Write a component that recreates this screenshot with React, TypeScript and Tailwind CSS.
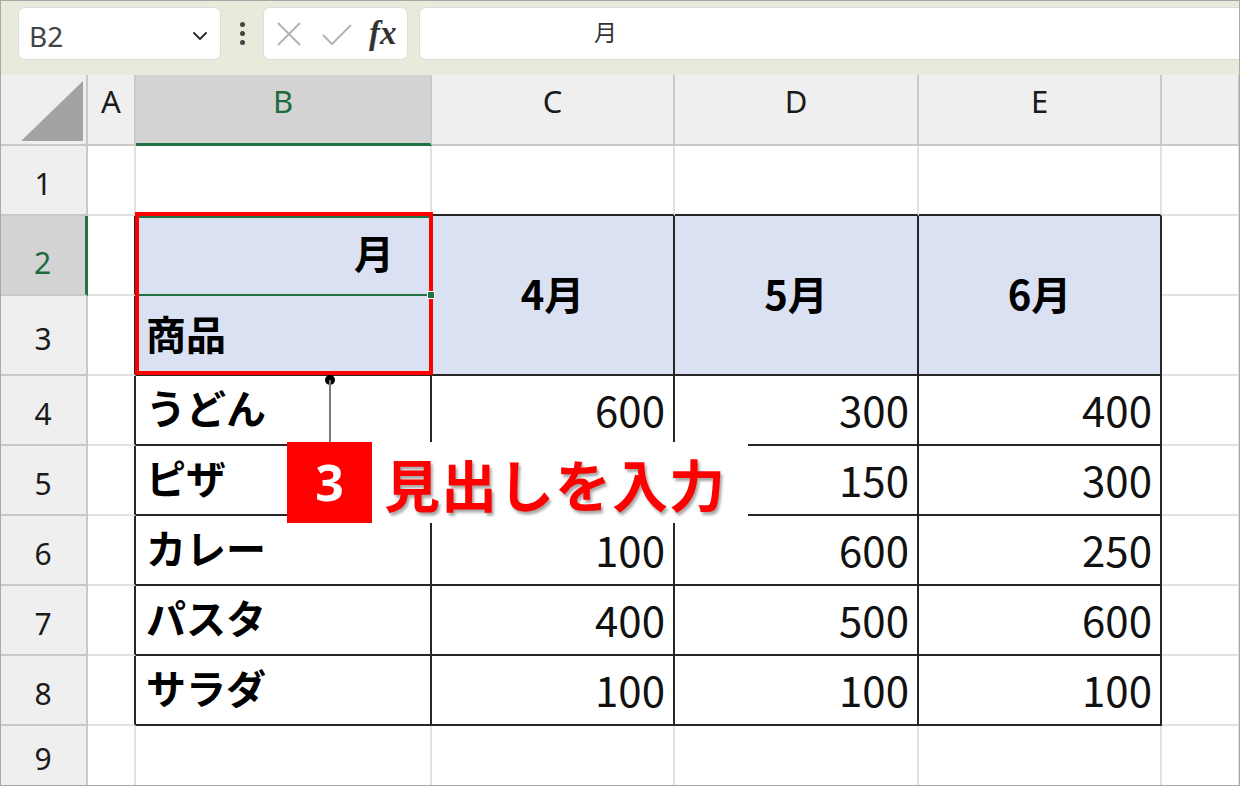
import { ChevronDown } from "lucide-react";

const COLS = ["A", "B", "C", "D", "E", ""];
const JP = '"Noto Sans CJK JP", "Noto Sans", sans-serif';

type Row = { name: string; values: string[] };

const rows: Row[] = [
  { name: "うどん", values: ["600", "300", "400"] },
  { name: "ピザ", values: ["", "150", "300"] },
  { name: "カレー", values: ["100", "600", "250"] },
  { name: "パスタ", values: ["400", "500", "600"] },
  { name: "サラダ", values: ["100", "100", "100"] },
];

const grid = "border-r-2 border-b-2 border-[#e2e2e2]";
const head = "border-r-2 border-b-2 border-[#c9c9c9] bg-[#efefef]";
const black = "border-r-2 border-b-2 border-[#262626]";

function FormulaBar() {
  return (
    <div className="flex h-[75px] items-start bg-[#e8ebdc] pt-[7px] pl-[18px]">
      <div className="flex h-[53px] w-[203px] items-center justify-between rounded-[7px] border border-[#dcdcdc] bg-white pt-[5px] pr-[8px] pl-[10px]">
        <span className="text-[28px] text-[#444]" style={{ fontFamily: '"Noto Sans", sans-serif' }}>
          B2
        </span>
        <ChevronDown size={24} strokeWidth={2} className="text-[#333]" />
      </div>
      <div className="flex h-[53px] w-[42px] flex-col items-center justify-center gap-[4px]">
        <span className="h-[5px] w-[5px] rounded-full bg-[#444]" />
        <span className="h-[5px] w-[5px] rounded-full bg-[#444]" />
        <span className="h-[5px] w-[5px] rounded-full bg-[#444]" />
      </div>
      <div className="flex h-[53px] w-[145px] items-center rounded-[7px] border border-[#dcdcdc] bg-white pl-[11px]">
        <svg width="28" height="28" viewBox="0 0 28 28" className="mr-[18px]">
          <path d="M3 3 L25 25 M25 3 L3 25" stroke="#b4b4b4" strokeWidth="2" fill="none" />
        </svg>
        <svg width="32" height="26" viewBox="0 0 32 26" className="mr-[16px]">
          <path d="M2 14 L11 23 L30 4" stroke="#b4b4b4" strokeWidth="2" fill="none" />
        </svg>
        <span
          className="text-[33px] font-bold text-[#333] italic leading-none"
          style={{ fontFamily: '"Liberation Serif", serif' }}
        >
          fx
        </span>
      </div>
      <div className="ml-[11px] flex h-[53px] flex-1 items-center rounded-l-[7px] border border-[#dcdcdc] bg-white pb-[4px] pl-[174px]">
        <span className="text-[23px] text-[#333]" style={{ fontFamily: JP }}>
          月
        </span>
      </div>
    </div>
  );
}

function Sheet() {
  return (
    <div
      className="grid grid-cols-[88px_48px_296px_243px_244px_243px_1fr] grid-rows-[71px_70px_80px_80px_70px_70px_70px_70px_70px_61px]"
      style={{ fontFamily: JP }}
    >
      {/* corner */}
      <div className={`${head} flex items-end justify-end pr-[3px] pb-[3px]`}>
        <svg width="62" height="60" viewBox="0 0 62 60">
          <polygon points="0,60 62,0 62,60" fill="#a3a3a3" />
        </svg>
      </div>
      {COLS.map((c) => (
        <div
          key={c || "F"}
          className={
            c === "B"
              ? "flex items-center justify-center border-r-2 border-b-[3px] border-r-[#c9c9c9] border-b-[#217346] bg-[#d3d3d3] pb-[16px] text-[31px] text-[#1d6b3d]"
              : `${head} flex items-center justify-center pb-[16px] text-[31px] text-[#1a1a1a]`
          }
          style={{ fontFamily: '"Noto Sans", sans-serif' }}
        >
          {c}
        </div>
      ))}

      {/* row 1 */}
      <RowHead n={1} />
      <div className={grid} />
      <div className="border-r-2 border-b-2 border-r-[#e2e2e2] border-b-[#262626]" />
      <div className="border-r-2 border-b-2 border-r-[#e2e2e2] border-b-[#262626]" />
      <div className="border-r-2 border-b-2 border-r-[#e2e2e2] border-b-[#262626]" />
      <div className="border-r-2 border-b-2 border-r-[#e2e2e2] border-b-[#262626]" />
      <div className={grid} />

      {/* rows 2 and 3: header block */}
      <div
        className="col-start-1 row-start-3 flex items-center justify-center border-r-[3px] border-b-2 border-r-[#217346] border-b-[#c9c9c9] bg-[#d3d3d3] pt-[14px] text-[30px] text-[#1d6b3d]"
        style={{ fontFamily: '"Noto Sans", sans-serif' }}
      >
        2
      </div>
      <div className="col-start-2 row-start-3 border-r-2 border-b-2 border-r-[#262626] border-b-[#e2e2e2]" />
      <div className="col-start-3 row-start-3 flex items-center justify-end border-r-2 border-[#262626] bg-[#dae1f2] pr-[36px] pb-[8px] text-[40px] font-bold text-black">
        月
      </div>
      {["4月", "5月", "6月"].map((m, i) => (
        <div
          key={m}
          className={`${black} row-span-2 row-start-3 flex items-center justify-center bg-[#dae1f2] pb-[4px] text-[40px] font-bold text-black`}
          style={{ gridColumnStart: i + 4 }}
        >
          {m}
        </div>
      ))}
      <div className={`${grid} col-start-7 row-start-3`} />

      <div className="col-start-1 row-start-4">
        <RowHead n={3} />
      </div>
      <div className="col-start-2 row-start-4 border-r-2 border-b-2 border-r-[#262626] border-b-[#e2e2e2]" />
      <div className={`${black} col-start-3 row-start-4 flex items-center bg-[#dae1f2] pb-[4px] pl-[10px] text-[40px] font-bold text-black`}>
        商品
      </div>
      <div className={`${grid} col-start-7 row-start-4`} />

      {rows.map((r, i) => (
        <DataRow key={r.name} n={i + 4} row={r} />
      ))}

      {/* row 9 */}
      <RowHead n={9} />
      <div className={grid} />
      <div className={grid} />
      <div className={grid} />
      <div className={grid} />
      <div className={grid} />
      <div className={grid} />
    </div>
  );
}

function RowHead({ n }: { n: number }) {
  return (
    <div
      className={`${head} flex h-full items-center justify-center pt-[6px] text-[30px] text-[#1a1a1a]`}
      style={{ fontFamily: '"Noto Sans", sans-serif' }}
    >
      {n}
    </div>
  );
}

function DataRow({ n, row }: { n: number; row: Row }) {
  return (
    <>
      <RowHead n={n} />
      <div className="border-r-2 border-b-2 border-r-[#262626] border-b-[#e2e2e2]" />
      <div className={`${black} flex items-center pb-[6px] pl-[10px] text-[40px] font-bold text-black`}>{row.name}</div>
      {row.values.map((v, i) => (
        <div key={i} className={`${black} flex items-center justify-end pr-[8px] pb-[4px] text-[42px] text-[#111]`}>
          {v}
        </div>
      ))}
      <div className={grid} />
    </>
  );
}

export default function App() {
  return (
    <div className="relative h-[786px] w-[1240px] overflow-hidden bg-white">
      <FormulaBar />
      <Sheet />

      {/* selection on B2 */}
      <div className="absolute top-[216px] left-[136px] h-[80px] w-[296px] border-2 border-[#217346]" />
      {/* red highlight */}
      <div className="absolute top-[212px] left-[135px] h-[163px] w-[298px] border-[4px] border-[#ff0000]" />
      <div className="absolute top-[291px] left-[427px] h-[8px] w-[8px] border border-white bg-[#217346]" />

      {/* callout */}
      <div className="absolute top-[375px] left-[325px] h-[10px] w-[10px] rounded-full bg-black" />
      <div className="absolute top-[380px] left-[329px] h-[62px] w-[2px] bg-[#7a7a7a]" />
      <div className="absolute top-[442px] left-[287px] flex h-[81px] w-[461px] bg-white">
        <div
          className="flex w-[85px] items-center justify-center bg-[#ff0000] text-[50px] font-bold text-white"
          style={{ fontFamily: '"Noto Sans", sans-serif' }}
        >
          3
        </div>
        <div
          className="flex items-center pl-[12px] text-[56px] font-bold tracking-[1px] text-[#ff0000] [text-shadow:2px_3px_3px_rgba(0,0,0,0.35)]"
          style={{ fontFamily: JP }}
        >
          見出しを入力
        </div>
      </div>

      <div className="pointer-events-none absolute inset-0 border border-[#a8a8a8]" />
    </div>
  );
}
